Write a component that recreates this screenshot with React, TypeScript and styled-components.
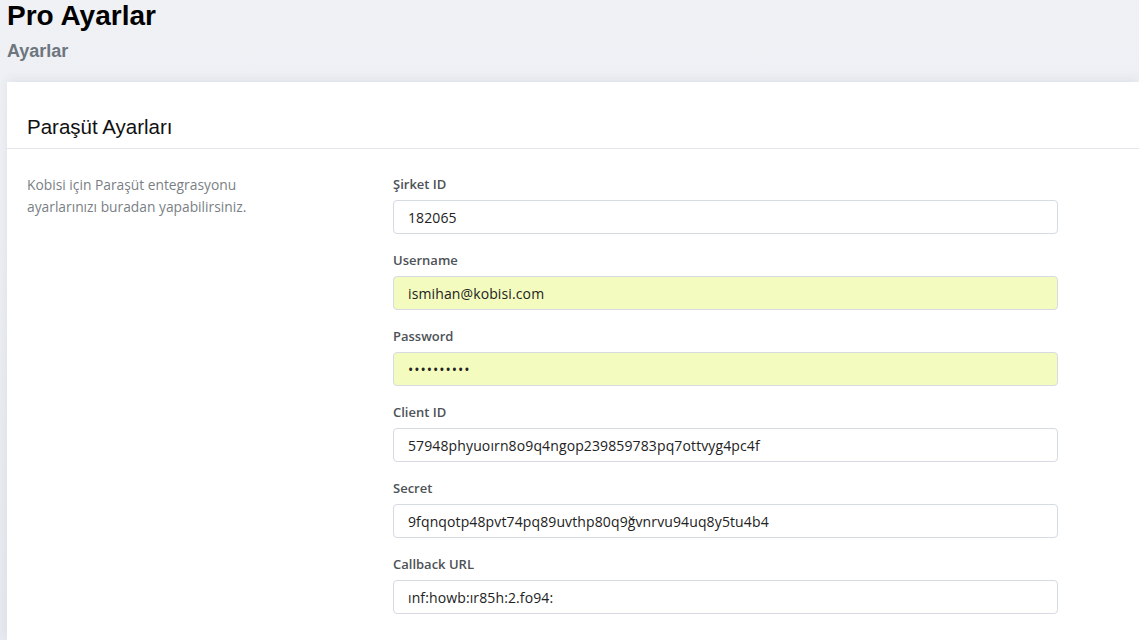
import styled, { createGlobalStyle } from 'styled-components';

const GlobalStyle = createGlobalStyle`
  html, body {
    margin: 0;
    padding: 0;
  }
  body {
    background: linear-gradient(180deg, #eff1f5 0%, #e6e9ef 100%);
    min-height: 640px;
    font-family: 'Liberation Sans', Arial, sans-serif;
    overflow: hidden;
  }
`;

const Page = styled.div`
  padding-left: 7px;
  min-height: 640px;
  display: flex;
  flex-direction: column;
`;

const PageHeader = styled.header`
  display: flex;
  flex-direction: column;
  gap: 8px;
  margin-bottom: 20px;
`;

const PageTitle = styled.h1`
  margin: 0;
  font-family: 'Liberation Sans', Arial, sans-serif;
  font-size: 28px;
  line-height: 32px;
  font-weight: 700;
  color: #000;
`;

const PageSubtitle = styled.h2`
  margin: 0;
  font-family: 'Liberation Sans', Arial, sans-serif;
  font-size: 18px;
  line-height: 22px;
  font-weight: 700;
  color: #6d757e;
`;

const Card = styled.section`
  flex: 1;
  background: #fff;
  box-shadow: 0 -3px 10px rgba(40, 50, 70, 0.07);
`;

const CardHeader = styled.div`
  padding: 33px 20px 9px;
  border-bottom: 1px solid #e4e4ec;
`;

const CardTitle = styled.h3`
  margin: 0;
  font-family: 'Liberation Sans', Arial, sans-serif;
  font-size: 20.5px;
  line-height: 24px;
  font-weight: 400;
  color: #111;
`;

const CardBody = styled.div`
  display: grid;
  grid-template-columns: 366px 665px;
  padding: 25px 20px 20px;
`;

const Description = styled.p`
  margin: 0;
  font-family: 'Open Sans', Lato, sans-serif;
  font-size: 13.8px;
  line-height: 22px;
  color: #7a7f86;
  max-width: 250px;
`;

const Form = styled.form`
  display: flex;
  flex-direction: column;
  gap: 16px;
`;

const Field = styled.div`
  display: flex;
  flex-direction: column;
  gap: 6px;
`;

const Label = styled.label`
  font-family: 'Open Sans', Lato, sans-serif;
  font-size: 13px;
  line-height: 20px;
  font-weight: 600;
  color: #4d5257;
`;

const Input = styled.input<{ $autofill?: boolean }>`
  box-sizing: border-box;
  width: 100%;
  height: 34px;
  padding: 0 14px;
  border: 1px solid #d5dae3;
  border-radius: 4px;
  background: ${(p) => (p.$autofill ? '#f3fcbe' : '#fff')};
  font-family: 'Open Sans', 'Liberation Sans', sans-serif;
  font-size: 14px;
  letter-spacing: 0.12px;
  color: #222;
  outline: none;
  &[type='password'] {
    letter-spacing: 1px;
  }
`;

const fields = [
  { id: 'company', label: 'Şirket ID', value: '182065' },
  { id: 'username', label: 'Username', value: 'ismihan@kobisi.com', autofill: true },
  { id: 'password', label: 'Password', value: '1234567890', autofill: true, type: 'password' },
  { id: 'client', label: 'Client ID', value: '57948phyuoırn8o9q4ngop239859783pq7ottvyg4pc4f' },
  { id: 'secret', label: 'Secret', value: '9fqnqotp48pvt74pq89uvthp80q9ğvnrvu94uq8y5tu4b4' },
  { id: 'callback', label: 'Callback URL', value: 'ınf:howb:ır85h:2.fo94:' },
];

const App = () => {
  return (
    <>
      <GlobalStyle />
      <Page>
        <PageHeader>
          <PageTitle>Pro Ayarlar</PageTitle>
          <PageSubtitle>Ayarlar</PageSubtitle>
        </PageHeader>
        <Card>
          <CardHeader>
            <CardTitle>Paraşüt Ayarları</CardTitle>
          </CardHeader>
          <CardBody>
            <Description>
              Kobisi için Paraşüt entegrasyonu ayarlarınızı buradan yapabilirsiniz.
            </Description>
            <Form onSubmit={(e) => e.preventDefault()}>
              {fields.map((f) => (
                <Field key={f.id}>
                  <Label htmlFor={f.id}>{f.label}</Label>
                  <Input
                    id={f.id}
                    type={f.type ?? 'text'}
                    value={f.value}
                    readOnly
                    $autofill={f.autofill}
                  />
                </Field>
              ))}
            </Form>
          </CardBody>
        </Card>
      </Page>
    </>
  );
};

export default App;
